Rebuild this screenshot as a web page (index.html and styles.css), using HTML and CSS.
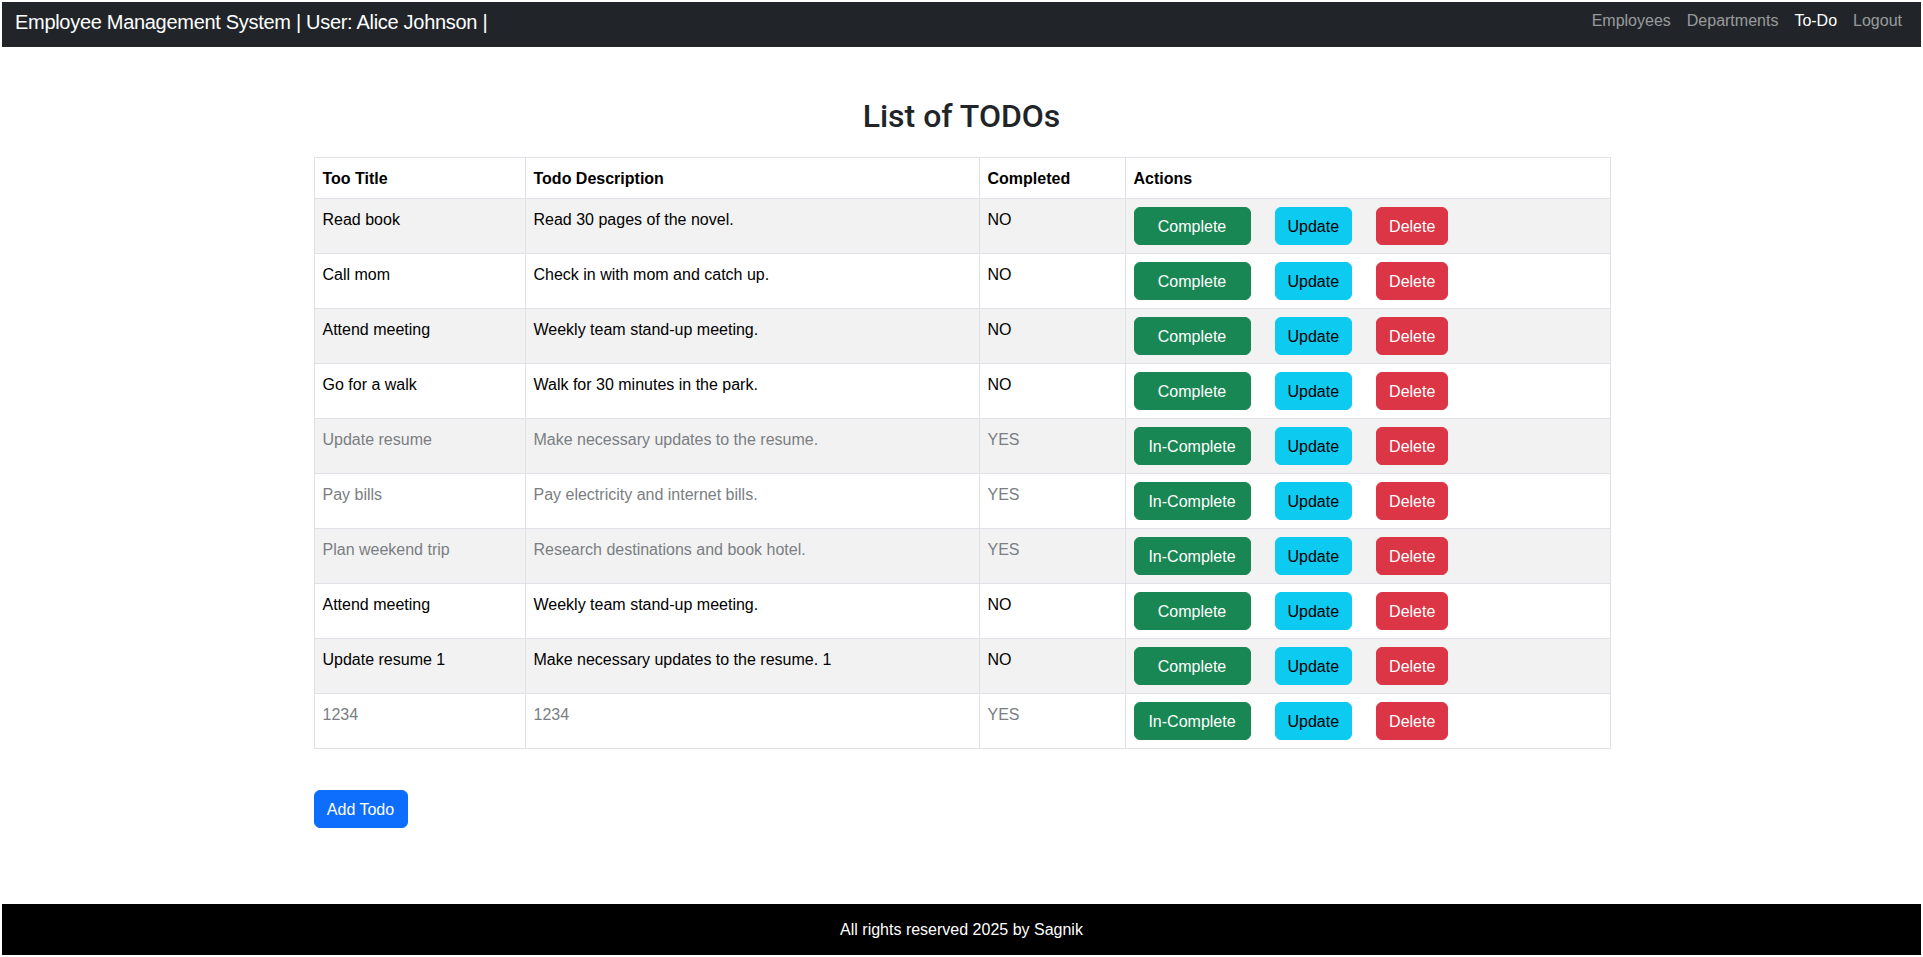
FILE: index.html
```html
<!DOCTYPE html>
<html lang="en">
<head>
<meta charset="utf-8">
<title>Employee Management System</title>
<link rel="stylesheet" href="styles.css">
</head>
<body>
<div class="page">
  <header class="navbar">
    <div class="brand">Employee Management System | User: Alice Johnson |</div>
    <nav class="nav-links">
      <a class="nav-link" href="#">Employees</a>
      <a class="nav-link" href="#">Departments</a>
      <a class="nav-link active" href="#">To-Do</a>
      <a class="nav-link" href="#">Logout</a>
    </nav>
  </header>

  <main class="container">
    <h2 class="title">List of TODOs</h2>
    <table class="todo-table">
      <colgroup>
        <col class="c-title">
        <col class="c-desc">
        <col class="c-done">
        <col class="c-actions">
      </colgroup>
      <thead>
        <tr><th>Too Title</th><th>Todo Description</th><th>Completed</th><th>Actions</th></tr>
      </thead>
      <tbody>
        <tr>
          <td>Read book</td><td>Read 30 pages of the novel.</td><td>NO</td>
          <td><div class="actions"><button class="btn btn-success btn-toggle">Complete</button><button class="btn btn-info">Update</button><button class="btn btn-danger">Delete</button></div></td>
        </tr>
        <tr>
          <td>Call mom</td><td>Check in with mom and catch up.</td><td>NO</td>
          <td><div class="actions"><button class="btn btn-success btn-toggle">Complete</button><button class="btn btn-info">Update</button><button class="btn btn-danger">Delete</button></div></td>
        </tr>
        <tr>
          <td>Attend meeting</td><td>Weekly team stand-up meeting.</td><td>NO</td>
          <td><div class="actions"><button class="btn btn-success btn-toggle">Complete</button><button class="btn btn-info">Update</button><button class="btn btn-danger">Delete</button></div></td>
        </tr>
        <tr>
          <td>Go for a walk</td><td>Walk for 30 minutes in the park.</td><td>NO</td>
          <td><div class="actions"><button class="btn btn-success btn-toggle">Complete</button><button class="btn btn-info">Update</button><button class="btn btn-danger">Delete</button></div></td>
        </tr>
        <tr class="done">
          <td>Update resume</td><td>Make necessary updates to the resume.</td><td>YES</td>
          <td><div class="actions"><button class="btn btn-success btn-toggle">In-Complete</button><button class="btn btn-info">Update</button><button class="btn btn-danger">Delete</button></div></td>
        </tr>
        <tr class="done">
          <td>Pay bills</td><td>Pay electricity and internet bills.</td><td>YES</td>
          <td><div class="actions"><button class="btn btn-success btn-toggle">In-Complete</button><button class="btn btn-info">Update</button><button class="btn btn-danger">Delete</button></div></td>
        </tr>
        <tr class="done">
          <td>Plan weekend trip</td><td>Research destinations and book hotel.</td><td>YES</td>
          <td><div class="actions"><button class="btn btn-success btn-toggle">In-Complete</button><button class="btn btn-info">Update</button><button class="btn btn-danger">Delete</button></div></td>
        </tr>
        <tr>
          <td>Attend meeting</td><td>Weekly team stand-up meeting.</td><td>NO</td>
          <td><div class="actions"><button class="btn btn-success btn-toggle">Complete</button><button class="btn btn-info">Update</button><button class="btn btn-danger">Delete</button></div></td>
        </tr>
        <tr>
          <td>Update resume 1</td><td>Make necessary updates to the resume. 1</td><td>NO</td>
          <td><div class="actions"><button class="btn btn-success btn-toggle">Complete</button><button class="btn btn-info">Update</button><button class="btn btn-danger">Delete</button></div></td>
        </tr>
        <tr class="done">
          <td>1234</td><td>1234</td><td>YES</td>
          <td><div class="actions"><button class="btn btn-success btn-toggle">In-Complete</button><button class="btn btn-info">Update</button><button class="btn btn-danger">Delete</button></div></td>
        </tr>
      </tbody>
    </table>
    <button class="btn btn-primary add-btn">Add Todo</button>
  </main>

  <footer class="footer">All rights reserved 2025 by Sagnik</footer>
</div>
</body>
</html>
```

FILE: styles.css
```css
* { box-sizing: border-box; }

html, body {
  margin: 0;
  padding: 0;
  background: #fff;
}

body {
  font-family: "Liberation Sans", Arial, sans-serif;
  font-size: 16px;
  line-height: 1.5;
  color: #212529;
}

.page {
  min-height: 957px;
  padding: 2px;
  display: flex;
  flex-direction: column;
}

/* Navbar */
.navbar {
  height: 45px;
  background: #212529;
  display: flex;
  justify-content: space-between;
  align-items: flex-start;
  padding: 0 11px 0 13px;
}

.brand {
  font-size: 20px;
  line-height: 30px;
  margin-top: 5px;
  letter-spacing: -0.3px;
  color: #fff;
  white-space: nowrap;
}

.nav-links {
  display: flex;
  margin-top: 7px;
}

.nav-link {
  padding: 0 8px;
  line-height: 24px;
  color: rgba(255, 255, 255, 0.55);
  text-decoration: none;
}

.nav-link.active {
  color: #fff;
}

/* Main */
.container {
  flex: 1;
  width: 1320px;
  margin: 0 auto;
  padding: 0 12px;
}

.title {
  margin: 50px 0 0;
  text-align: center;
  font-family: Roboto, "Liberation Sans", sans-serif;
  font-size: 32px;
  line-height: 38px;
  font-weight: 500;
  color: #212529;
}

.todo-table {
  margin-top: 22px;
  width: 1296px;
  table-layout: fixed;
  border-collapse: collapse;
  border: 1px solid #dee2e6;
}

.c-title { width: 211px; }
.c-desc { width: 454px; }
.c-done { width: 146px; }
.c-actions { width: 485px; }

.todo-table th,
.todo-table td {
  border: 1px solid #dee2e6;
  padding: 9px 7px 7px 8px;
  text-align: left;
  vertical-align: top;
  line-height: 24px;
}

.todo-table td:last-child {
  padding-top: 8px;
  padding-bottom: 8px;
}

.todo-table th {
  font-weight: 700;
  color: #000;
}

.todo-table td {
  color: #000;
}

.todo-table tbody tr:nth-child(odd) td {
  background: #f2f2f2;
}

.todo-table tr.done td {
  color: #7a7e82;
}

.actions {
  display: flex;
  gap: 24px;
}

/* Buttons */
.btn {
  font-family: inherit;
  font-size: 16px;
  line-height: 24px;
  padding: 7px 12px 5px;
  border: 1px solid transparent;
  border-radius: 6px;
  cursor: pointer;
}

.btn-toggle {
  width: 117px;
  padding-left: 0;
  padding-right: 0;
  text-align: center;
}

.btn-success {
  background: #198754;
  border-color: #198754;
  color: #fff;
}

.btn-info {
  background: #0dcaf0;
  border-color: #0dcaf0;
  color: #000;
}

.btn-danger {
  background: #dc3545;
  border-color: #dc3545;
  color: #fff;
}

.btn-primary {
  background: #0d6efd;
  border-color: #0d6efd;
  color: #fff;
}

.add-btn {
  display: block;
  margin-top: 41px;
  width: 94px;
  padding-left: 0;
  padding-right: 0;
  text-align: center;
}

/* Footer */
.footer {
  height: 51px;
  background: #000;
  color: #fff;
  display: flex;
  align-items: center;
  justify-content: center;
}
```
